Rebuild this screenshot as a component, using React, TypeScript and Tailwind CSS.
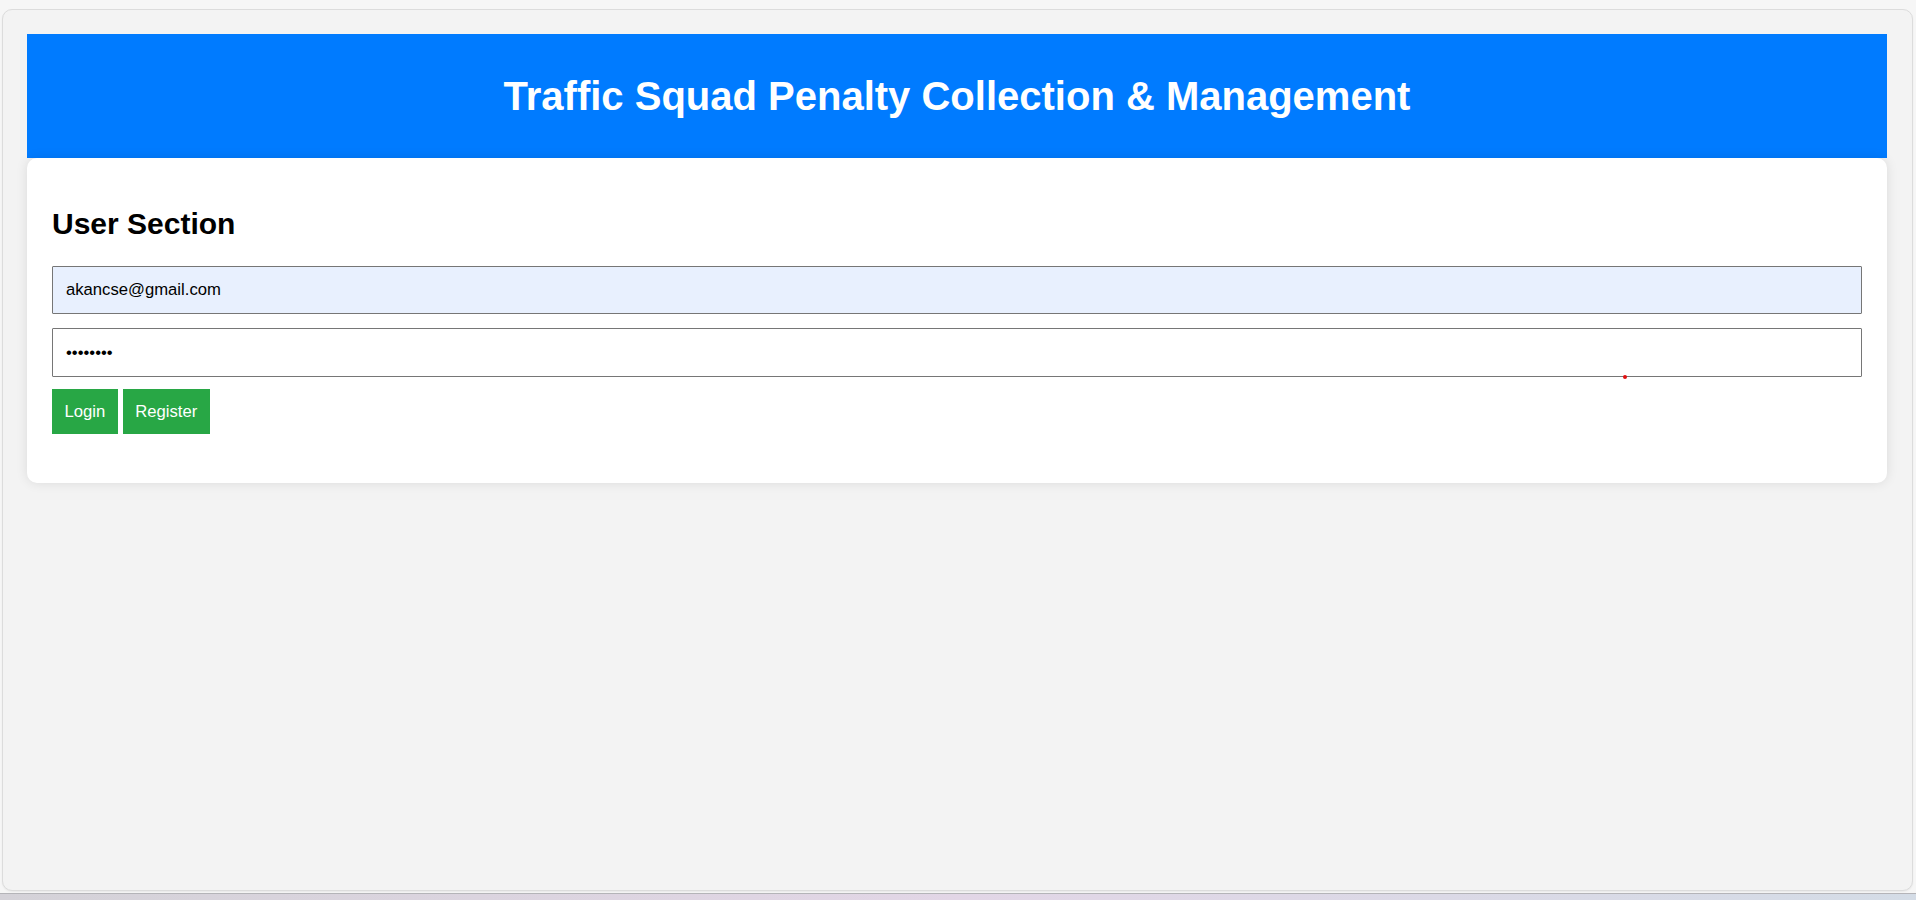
export default function App() {
  return (
    <div className="relative h-[900px] bg-[#f6f6f6] flex flex-col font-['Liberation_Sans',Arial,sans-serif]">
      <div className="flex-1 ml-[2px] mr-[3px] mt-[9px] mb-[2px] rounded-[10px] border border-[#dcdcdc] bg-[#f3f3f3] pl-[24px] pr-[25px] pt-[24px] shadow-[0_1px_2px_rgba(0,0,0,0.06)]">
        <header className="h-[124px] bg-[#007bff] flex items-center justify-center">
          <h1 className="text-[40px] font-bold text-white leading-[46px]">
            Traffic Squad Penalty Collection &amp; Management
          </h1>
        </header>

        <section className="bg-white rounded-[10px] shadow-[0_0_12px_rgba(0,0,0,0.1)] px-[25px] pt-[48px] pb-[49px]">
          <h2 className="text-[30px] font-bold text-black leading-[35px]">User Section</h2>

          <input
            type="email"
            defaultValue="akancse@gmail.com"
            className="mt-[25px] block w-full h-[48px] px-[13px] text-[16.67px] text-black bg-[#e8f0fe] border border-[#767676] rounded-[1px] outline-none"
          />
          <input
            type="password"
            defaultValue="password"
            className="mt-[14px] block w-full h-[49px] px-[13px] text-[16.67px] text-black bg-white border border-[#767676] rounded-[1px] outline-none"
          />

          <div className="mt-[12px] flex gap-[5px]">
            <button className="h-[45px] px-[12.5px] bg-[#28a745] text-white text-[16.67px]">Login</button>
            <button className="h-[45px] px-[12.5px] bg-[#28a745] text-white text-[16.67px]">Register</button>
          </div>
        </section>
      </div>

      <div className="h-[7px] border-t border-[#b4b4b8] bg-gradient-to-r from-[#d4d2d8] via-[#e2d6e6] to-[#d4dce6]" />

      <span className="absolute z-10 left-[1623px] top-[375px] w-[4px] h-[4px] rounded-full bg-[#e01010]" />
    </div>
  );
}
